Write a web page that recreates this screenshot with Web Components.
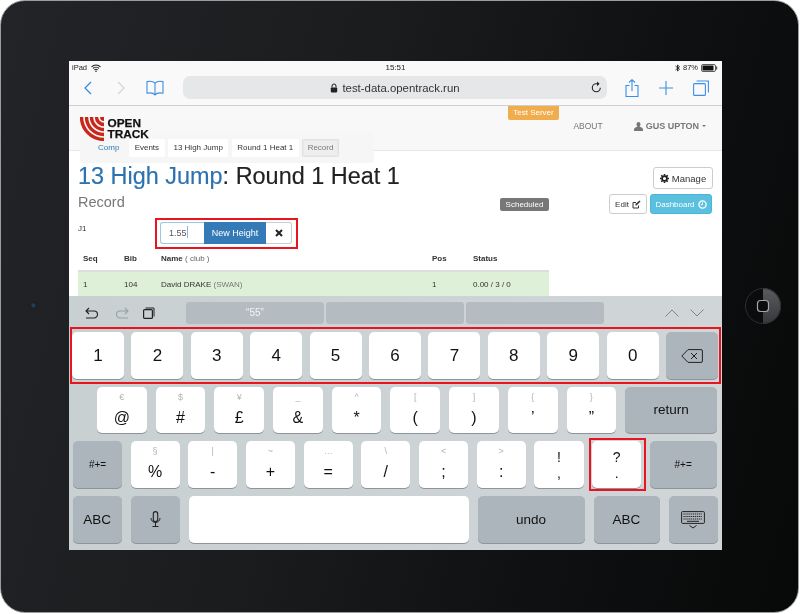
<!DOCTYPE html>
<html>
<head>
<meta charset="utf-8">
<title>OpenTrack on iPad</title>
<style>
    html, body { margin: 0; padding: 0; background: #fff; font-family: "Liberation Sans", Arial, sans-serif; }
</style>
</head>
<body>
<ipad-frame>
    <status-bar></status-bar>
    <safari-bar></safari-bar>
    <site-header></site-header>
    <record-page></record-page>
    <ios-keyboard></ios-keyboard>
</ipad-frame>

<script>
const SANS = '"Liberation Sans", Arial, sans-serif';

class IpadFrame extends HTMLElement {
    constructor() {
        super();
        this.attachShadow({ mode: 'open' });
        this.shadowRoot.innerHTML = `
            <style>
                :host {
                    display: block;
                    position: relative;
                    box-sizing: border-box;
                    width: 799px;
                    height: 613px;
                    padding: 60px 77px 63px 68px;
                    border-radius: 25px;
                    border: 1px solid #9a9c9e;
                    background: linear-gradient(105deg, #232427 0%, #1b1c1e 40%, #0f1011 72%, #070808 100%);
                }
                .screen {
                    display: flex;
                    flex-direction: column;
                    position: relative;
                    width: 653px;
                    height: 489px;
                    background: #fff;
                    overflow: hidden;
                    filter: blur(0.25px);
                }
                .camera {
                    position: absolute;
                    left: 29px;
                    top: 301px;
                    width: 7px;
                    height: 7px;
                    border-radius: 50%;
                    background: radial-gradient(circle, #2c4a66 0%, #16222d 60%, #0c0d0e 100%);
                }
                .home {
                    position: absolute;
                    left: 744px;
                    top: 287px;
                    width: 36px;
                    height: 36px;
                }
            </style>
            <div class="screen"><slot></slot></div>
            <div class="camera"></div>
            <svg class="home" viewBox="0 0 36 36">
                <defs><linearGradient id="hb" x1="0" y1="0" x2="0" y2="1"><stop offset="0" stop-color="#5a5b5f"/><stop offset="1" stop-color="#37383b"/></linearGradient></defs>
                <path d="M18 0a18 18 0 0 1 0 36z" fill="url(#hb)"/>
                <circle cx="18" cy="18" r="17.5" fill="none" stroke="#2e2f31"/>
                <rect x="12.500" y="12.500" width="11" height="11" rx="3" fill="#0c0c0d" stroke="#a5a6a8" stroke-width="1.200"/>
            </svg>
        `;
    }
}

class StatusBar extends HTMLElement {
    constructor() {
        super();
        this.attachShadow({ mode: 'open' });
        this.shadowRoot.innerHTML = `
            <style>
                :host {
                    display: grid;
                    grid-template-columns: 1fr auto 1fr;
                    align-items: center;
                    height: 13px;
                    padding: 0 4px 0 3px;
                    background: #f9f9f9;
                    color: #222;
                    font: 7.500px ${SANS};
                }
                .left, .right { display: flex; align-items: center; gap: 4px; }
                .right { justify-content: flex-end; gap: 3px; }
                .time { font-size: 8px; padding-left: 1px; }
            </style>
            <div class="left">
                iPad
                <svg width="10" height="8" viewBox="0 0 10 8"><path d="M0.500 2.800a6.400 6.400 0 0 1 9 0M2 4.400a4.300 4.300 0 0 1 6 0M3.400 5.900a2.200 2.200 0 0 1 3.200 0" fill="none" stroke="#222" stroke-width="1.100"/><circle cx="5" cy="7.200" r=".8" fill="#222"/></svg>
            </div>
            <div class="time">15:51</div>
            <div class="right">
                <svg width="5" height="8" viewBox="0 0 5 8"><path d="M.5 2l4 3.300L2.500 7V1l2 1.700-4 3.300" fill="none" stroke="#222" stroke-width=".9"/></svg>
                87%
                <svg width="17" height="8" viewBox="0 0 17 8"><rect x=".5" y=".5" width="14" height="7" rx="1.500" fill="none" stroke="#333" stroke-width=".8"/><rect x="1.500" y="1.500" width="11" height="5" rx=".6" fill="#111"/><rect x="15" y="2.500" width="1.200" height="3" fill="#555"/></svg>
            </div>
        `;
    }
}

class SafariBar extends HTMLElement {
    constructor() {
        super();
        this.attachShadow({ mode: 'open' });
        this.shadowRoot.innerHTML = `
            <style>
                :host {
                    display: flex;
                    align-items: center;
                    box-sizing: border-box;
                    height: 32px;
                    padding: 0 12px 4px 14px;
                    background: #f9f9f9;
                    border-bottom: 1px solid #cfcfd1;
                    font: 11.400px ${SANS};
                    color: #333;
                }
                svg { display: block; flex: none; }
                .back { margin-right: 23px; }
                .fwd { margin-right: 20px; }
                .book { margin-right: 19px; }
                .url {
                    position: relative;
                    display: flex;
                    align-items: center;
                    justify-content: center;
                    gap: 4px;
                    width: 424px;
                    height: 23px;
                    margin-right: 18px;
                    box-sizing: border-box;
                    border-radius: 7px;
                    background: #e6e7e9;
                }
                .reload { position: absolute; right: 5px; top: 5px; }
                .plus { margin: 0 20px 0 20px; }
            </style>
            <svg class="back" width="10" height="14" viewBox="0 0 10 14"><path d="M8 1L2 7l6 6" fill="none" stroke="#2f87e8" stroke-width="1.200"/></svg>
            <svg class="fwd" width="10" height="14" viewBox="0 0 10 14"><path d="M2 1l6 6-6 6" fill="none" stroke="#d4d4d6" stroke-width="1.200"/></svg>
            <svg class="book" width="18" height="16" viewBox="0 0 18 16"><path d="M9 3.200C7.400 1.400 4 1 1 1.600v11.600c3-.6 6.400-.2 8 1.600 1.600-1.800 5-2.200 8-1.600V1.600C14 1 10.600 1.400 9 3.200zM9 3.200v11.600" fill="none" stroke="#3b8fe8" stroke-width="1.100"/></svg>
            <div class="url">
                <svg width="8" height="10" viewBox="0 0 8 10"><path d="M2 4.500V3a2 2 0 0 1 4 0v1.500" fill="none" stroke="#222" stroke-width="1"/><rect x=".8" y="4.400" width="6.400" height="5" rx=".8" fill="#222"/></svg>
                test-data.opentrack.run
                <svg class="reload" width="11" height="12" viewBox="0 0 11 12"><path d="M9.300 6.800A4 4 0 1 1 5.300 2.800h2" fill="none" stroke="#222" stroke-width="1.100"/><path d="M6 .4l2.600 2.400L6 5.200z" fill="#222"/></svg>
            </div>
            <svg width="14" height="18" viewBox="0 0 14 18"><path d="M4.500 6.500H1v11h12v-11H9.500M7 12V1M4 3.500L7 .7l3 2.800" fill="none" stroke="#3b8fe8" stroke-width="1.100"/></svg>
            <svg class="plus" width="14" height="14" viewBox="0 0 14 14"><path d="M7 0v14M0 7h14" stroke="#3b8fe8" stroke-width="1.100"/></svg>
            <svg width="16" height="16" viewBox="0 0 16 16"><rect x=".6" y="3.600" width="11.800" height="11.800" rx="1" fill="none" stroke="#3b8fe8" stroke-width="1.100"/><path d="M3.600 1h11.800v11.400" fill="none" stroke="#3b8fe8" stroke-width="1.100"/></svg>
        `;
    }
}

class SiteHeader extends HTMLElement {
    constructor() {
        super();
        this.attachShadow({ mode: 'open' });
        this.shadowRoot.innerHTML = `
            <style>
                :host {
                    display: flex;
                    position: relative;
                    justify-content: space-between;
                    box-sizing: border-box;
                    height: 45px;
                    padding: 11px 16px 0 11px;
                    background: #f8f8f8;
                    border-bottom: 1px solid #e7e7e7;
                    font: 8.500px ${SANS};
                    color: #777;
                }
                .logo { display: flex; gap: 3.500px; color: #111; position: relative; z-index: 1; }
                .logo svg { display: block; }
                .logo b { font-size: 11.800px; line-height: 11px; padding-top: 1px; -webkit-text-stroke: .25px #111; }
                .links { display: flex; align-items: flex-start; gap: 31px; padding-top: 4px; }
                .user { display: flex; align-items: center; gap: 3px; font-weight: bold; font-size: 9px; }
                .caret { border: 2.200px solid transparent; border-top-color: #777; border-bottom: 0; }
                .badge {
                    position: absolute;
                    left: 439px;
                    top: 0;
                    width: 51px;
                    height: 14px;
                    line-height: 14px;
                    text-align: center;
                    background: #f0ad4e;
                    border-radius: 0 0 2px 2px;
                    color: #fff;
                    font-size: 8px;
                }
                .crumbs {
                    position: absolute;
                    left: 11px;
                    top: 27px;
                    width: 294px;
                    height: 30px;
                    box-sizing: border-box;
                    display: flex;
                    align-items: center;
                    gap: 3.200px;
                    padding: 0 0 0 18px;
                    border-radius: 4px;
                    background: rgba(245,245,245,.92);
                    font-size: 8px;
                    color: #333;
                }
                .crumbs span { height: 18px; line-height: 18px; padding: 0 5.600px; background: #fff; border-radius: 2px; }
                .crumbs .first { background: none; color: #337ab7; padding: 0 6.500px 0 0; }
                .crumbs .cur { background: #eee; color: #777; box-shadow: inset 0 0 0 1.500px #e2e2e2; }
            </style>
            <div class="logo">
                <svg width="24" height="24" viewBox="0 0 24 24" fill="none" stroke="#c8281c" stroke-width="3.400">
                    <path d="M1.500 0A22.500 22.500 0 0 0 24 22.500"/>
                    <path d="M6.500 0A17.500 17.500 0 0 0 24 17.500"/>
                    <path d="M11.500 0A12.500 12.500 0 0 0 24 12.500"/>
                    <path d="M16.500 0A7.500 7.500 0 0 0 24 7.500"/>
                    <path d="M20 0a4 4 0 0 0 4 4V0z" fill="#c8281c" stroke="none"/>
                </svg>
                <b>OPEN<br>TRACK</b>
            </div>
            <div class="links">
                <div>ABOUT</div>
                <div class="user">
                    <svg width="9" height="9" viewBox="0 0 9 9"><path d="M4.500 0a2 2.300 0 0 1 2 2.300c0 1-.5 2-1 2.500 1 .5 3.500.8 3.500 2.700V9H0V7.500c0-1.900 2.500-2.200 3.500-2.700-.5-.5-1-1.500-1-2.500a2 2.300 0 0 1 2-2.300z" fill="#777"/></svg>
                    GUS UPTON
                    <i class="caret"></i>
                </div>
            </div>
            <div class="badge">Test Server</div>
            <nav class="crumbs">
                <span class="first">Comp</span>
                <span>Events</span>
                <span>13 High Jump</span>
                <span>Round 1 Heat 1</span>
                <span class="cur">Record</span>
            </nav>
        `;
    }
}

class RecordPage extends HTMLElement {
    constructor() {
        super();
        this.attachShadow({ mode: 'open' });
        this.shadowRoot.innerHTML = `
            <style>
                :host {
                    display: block;
                    box-sizing: border-box;
                    height: 145px;
                    padding: 16px 9px 0 9px;
                    background: #fff;
                    color: #333;
                    font: 8px ${SANS};
                    overflow: hidden;
                }
                .title-row { display: flex; justify-content: space-between; align-items: flex-start; height: 27px; }
                h1 { margin: -4px 0 0 0; font-size: 23.450px; font-weight: normal; line-height: 27px; color: #222; -webkit-text-stroke: .15px currentColor; }
                h1 a { color: #2c72b0; }
                .btn {
                    display: flex;
                    align-items: center;
                    justify-content: center;
                    gap: 3px;
                    box-sizing: border-box;
                    border: 1px solid #ccc;
                    border-radius: 3px;
                    background: #fff;
                    color: #333;
                }
                .manage { width: 60px; height: 22px; font-size: 9.500px; }
                .sub { display: flex; align-items: center; height: 20px; }
                .sub h2 { margin: 0 0 4px 0; width: 422px; font-size: 14.500px; font-weight: normal; color: #777; }
                .sched {
                    width: 49px; height: 13px; line-height: 13px; text-align: center;
                    background: #777; color: #fff; border-radius: 2px;
                    margin-right: 60px;
                }
                .edit { width: 38px; height: 20px; margin-right: 3px; }
                .dash { width: 62px; height: 20px; background: #5bc0de; border-color: #46b8da; color: #fff; }
                .j { display: flex; align-items: flex-start; height: 36px; padding-top: 8px; box-sizing: border-box; }
                .j > span { width: 82px; padding-top: 2px; }
                .group { display: flex; position: relative; height: 22px; }
                .group .in {
                    box-sizing: border-box; width: 44px; line-height: 20px; padding-left: 8px;
                    border: 1px solid #9ec6e8; border-right: 0; border-radius: 3px 0 0 3px; color: #555; font-size: 9px;
                }
                .group .in i { display: inline-block; width: 1px; height: 12px; background: #8ab4e8; vertical-align: -2px; }
                .group .go { width: 62px; line-height: 22px; text-align: center; background: #337ab7; color: #fff; font-size: 9px; }
                .group .x { width: 26px; box-sizing: border-box; border: 1px solid #ccc; border-left: 0; border-radius: 0 3px 3px 0; display: flex; align-items: center; justify-content: center; }
                .red { position: absolute; left: -5px; top: -4px; width: 143px; height: 31px; box-sizing: border-box; border: 2px solid #e8141e; }
                table { width: 471px; border-collapse: collapse; table-layout: fixed; font-size: 8px; }
                th { height: 17px; text-align: left; padding: 0 0 3px 5px; border-bottom: 2px solid #ddd; color: #333; }
                th em { font-style: normal; font-weight: normal; color: #666; }
                td { height: 25px; padding: 0 0 0 5px; background: #dff0d8; }
                td small { font-size: 8px; color: #777; }
            </style>
            <div class="title-row">
                <h1><a>13 High Jump</a>: Round 1 Heat 1</h1>
                <div class="btn manage">
                    <svg width="9" height="9" viewBox="0 0 9 9"><circle cx="4.500" cy="4.500" r="2.400" fill="none" stroke="#222" stroke-width="1.700"/><path d="M4.500 0v1.800M4.500 7.200V9M0 4.500h1.800M7.200 4.500H9M1.300 1.300l1.300 1.300M6.400 6.400l1.300 1.300M7.700 1.300L6.400 2.600M2.600 6.400L1.300 7.700" stroke="#222" stroke-width="1.600"/></svg>
                    Manage
                </div>
            </div>
            <div class="sub">
                <h2>Record</h2>
                <div class="sched">Scheduled</div>
                <div class="btn edit">Edit
                    <svg width="9" height="9" viewBox="0 0 9 9"><path d="M6.500 5.500V8H1V2.500h3" fill="none" stroke="#333" stroke-width="1"/><path d="M3.500 4l4-3.500 1 1-4 4H3.500z" fill="#333"/></svg>
                </div>
                <div class="btn dash">Dashboard
                    <svg width="9" height="9" viewBox="0 0 9 9"><circle cx="4.500" cy="4.500" r="3.600" fill="none" stroke="#fff" stroke-width="1.300"/><path d="M4.500 2.300v2.400H2.800" fill="none" stroke="#fff"/></svg>
                </div>
            </div>
            <div class="j">
                <span>J1</span>
                <div class="group">
                    <div class="in">1.55<i></i></div>
                    <div class="go">New Height</div>
                    <div class="x"><svg width="8" height="8" viewBox="0 0 8 8"><path d="M1 1l6 6M7 1L1 7" stroke="#222" stroke-width="2"/></svg></div>
                    <div class="red"></div>
                </div>
            </div>
            <table>
                <colgroup><col style="width:41px"><col style="width:37px"><col style="width:271px"><col style="width:41px"><col></colgroup>
                <tr><th>Seq</th><th>Bib</th><th>Name <em>( club )</em></th><th>Pos</th><th>Status</th></tr>
                <tr><td>1</td><td>104</td><td>David DRAKE <small>(SWAN)</small></td><td>1</td><td>0.00 / 3 / 0</td></tr>
            </table>
        `;
    }
}

class KbKey extends HTMLElement {
    constructor() {
        super();
        this.attachShadow({ mode: 'open' });
        const alt = this.getAttribute('alt');
        this.shadowRoot.innerHTML = `
            <style>
                :host {
                    display: flex;
                    flex-direction: column;
                    align-items: center;
                    justify-content: center;
                    box-sizing: border-box;
                    height: 47px;
                    border-radius: 5px;
                    background: #fff;
                    box-shadow: 0 1px 0 #8e9499;
                    color: #111;
                    font: 16px ${SANS};
                }
                :host([dark]) { background: #adb5bc; font-size: 13.500px; }
                :host([small]) { font-size: 10px; }
                :host([alt]) { justify-content: flex-start; padding-top: 5px; }
                .alt { font-size: 9px; line-height: 11px; color: #b3b4b6; height: 11px; }
                .main { line-height: 18px; }
                :host([alt]) .main { margin-top: 6px; }
            </style>
            ${alt !== null ? `<div class="alt">${alt}</div>` : ''}
            <div class="main"><slot></slot></div>
        `;
    }
}

class IosKeyboard extends HTMLElement {
    constructor() {
        super();
        this.attachShadow({ mode: 'open' });
        const key = (text, alt, w, h) => `<kb-key alt="${alt}" style="width:${w}px;height:${h}px">${text}</kb-key>`;
        const digits = '1234567890'.split('').map(d => `<kb-key style="flex:1;font-size:17px">${d}</kb-key>`).join('');
        const row2 = [['@','€'],['#','$'],['£','¥'],['&amp;','_'],['*','^'],['(','['],[')',']'],['’','{'],['”','}']]
            .map(k => key(k[0], k[1], 49.7, 46)).join('');
        const row3 = [['%','§'],['-','|'],['+','~'],['=','…'],['/','\\'],[';','&lt;'],[':','&gt;']]
            .map(k => key(k[0], k[1], 49.2, 47)).join('');
        this.shadowRoot.innerHTML = `
            <style>
                :host {
                    display: flex;
                    flex-direction: column;
                    position: relative;
                    flex: 1;
                    background: linear-gradient(90deg, #c8d0d2 0%, #d0d5d8 100%);
                    font-family: ${SANS};
                }
                .tools { display: flex; align-items: center; height: 36px; padding: 2px 13px 4px 16px; box-sizing: border-box; }
                .tools svg { display: block; flex: none; }
                .pills { display: flex; gap: 2px; margin: 0 61px 0 31px; }
                .pills div {
                    width: 138px; height: 22px; line-height: 22px; text-align: center;
                    border-radius: 3px; background: #b5bcc1; color: #f2f4f5; font-size: 10px;
                }
                .rows { display: flex; flex-direction: column; gap: 8px; padding: 0 4px 0 4px; }
                .row { display: flex; }
                .r1 { gap: 7.500px; }
                .r2 { gap: 9px; padding-left: 24px; }
                .r3 { gap: 8.500px; }
                .r4 { gap: 9px; }
                .mark { position: absolute; box-sizing: border-box; border: 2px solid #e8141e; }
                .m1 { left: 1px; top: 31px; width: 651px; height: 57px; }
                .m2 { left: 520px; top: 142px; width: 57px; height: 53px; }
            </style>
            <div class="tools">
                <svg width="14" height="13" viewBox="0 0 14 13" style="margin-right:16px"><path d="M4 1L1 4l3 3M1 4h8a3.500 3.500 0 0 1 0 7H1" fill="none" stroke="#222" stroke-width="1.100"/></svg>
                <svg width="14" height="13" viewBox="0 0 14 13" style="margin-right:14px"><path d="M10 1l3 3-3 3M13 4H5a3.500 3.500 0 0 0 0 7h8" fill="none" stroke="#9aa0a4" stroke-width="1.100"/></svg>
                <svg width="12" height="12" viewBox="0 0 12 12"><rect x=".6" y="2.600" width="8.800" height="8.800" rx="1" fill="none" stroke="#222" stroke-width="1.200"/><path d="M2.500 1h8.500v8.500" fill="none" stroke="#222" stroke-width="1"/></svg>
                <div class="pills"><div>“55”</div><div></div><div></div></div>
                <svg width="14" height="8" viewBox="0 0 14 8" style="margin-right:11px"><path d="M.5 7.500L7 1l6.500 6.500" fill="none" stroke="#7f8589" stroke-width="1"/></svg>
                <svg width="14" height="8" viewBox="0 0 14 8"><path d="M.5.500L7 7l6.500-6.500" fill="none" stroke="#7f8589" stroke-width="1"/></svg>
            </div>
            <div class="rows">
                <div class="row r1" style="margin-left:-1px">
                    ${digits}
                    <kb-key dark style="flex:1"><svg width="22" height="14" viewBox="0 0 22 14" style="display:block"><path d="M7 .6h13a1.400 1.400 0 0 1 1.400 1.400v10a1.400 1.400 0 0 1-1.400 1.400H7L.8 7z" fill="none" stroke="#222" stroke-width="1"/><path d="M10 4l6 6M16 4l-6 6" stroke="#222" stroke-width="1"/></svg></kb-key>
                </div>
                <div class="row r2">
                    ${row2}
                    <kb-key dark style="width:92px;height:46px">return</kb-key>
                </div>
                <div class="row r3">
                    <kb-key dark small style="width:49px">#+=</kb-key>
                    ${row3}
                    <kb-key style="width:49.200px;font-size:14px"><div style="line-height:16px;text-align:center">!<br>,</div></kb-key>
                    <kb-key style="width:49.200px;font-size:14px"><div style="line-height:16px;text-align:center">?<br>.</div></kb-key>
                    <kb-key dark small style="width:67px">#+=</kb-key>
                </div>
                <div class="row r4">
                    <kb-key dark style="width:48.500px">ABC</kb-key>
                    <kb-key dark style="width:49px"><svg width="11" height="17" viewBox="0 0 11 17" style="display:block"><rect x="3.300" y=".6" width="4.400" height="10" rx="2.200" fill="#adb5bc" stroke="#222" stroke-width="1.100"/><path d="M1 7a4.500 4.500 0 0 0 9 0M5.500 11.500V15M2.500 15.500h6" fill="none" stroke="#222" stroke-width="1"/></svg></kb-key>
                    <kb-key style="width:280px"></kb-key>
                    <kb-key dark style="width:107px">undo</kb-key>
                    <kb-key dark style="width:66px">ABC</kb-key>
                    <kb-key dark style="width:49px"><svg width="24" height="18" viewBox="0 0 24 18" style="display:block"><rect x=".6" y=".6" width="22.800" height="11.800" rx="1" fill="none" stroke="#222" stroke-width="1"/><path d="M2.500 3h19M2.500 5.500h19M2.500 8h19" stroke="#222" stroke-width="1.200" stroke-dasharray="1.200 .7"/><path d="M6 10.300h12" stroke="#222" stroke-width="1"/><path d="M8.500 14.500L12 17l3.500-2.500" fill="none" stroke="#222" stroke-width="1"/></svg></kb-key>
                </div>
            </div>
            <div class="mark m1"></div>
            <div class="mark m2"></div>
        `;
    }
}

customElements.define('kb-key', KbKey);
customElements.define('ipad-frame', IpadFrame);
customElements.define('status-bar', StatusBar);
customElements.define('safari-bar', SafariBar);
customElements.define('site-header', SiteHeader);
customElements.define('record-page', RecordPage);
customElements.define('ios-keyboard', IosKeyboard);
</script>
</body>
</html>
